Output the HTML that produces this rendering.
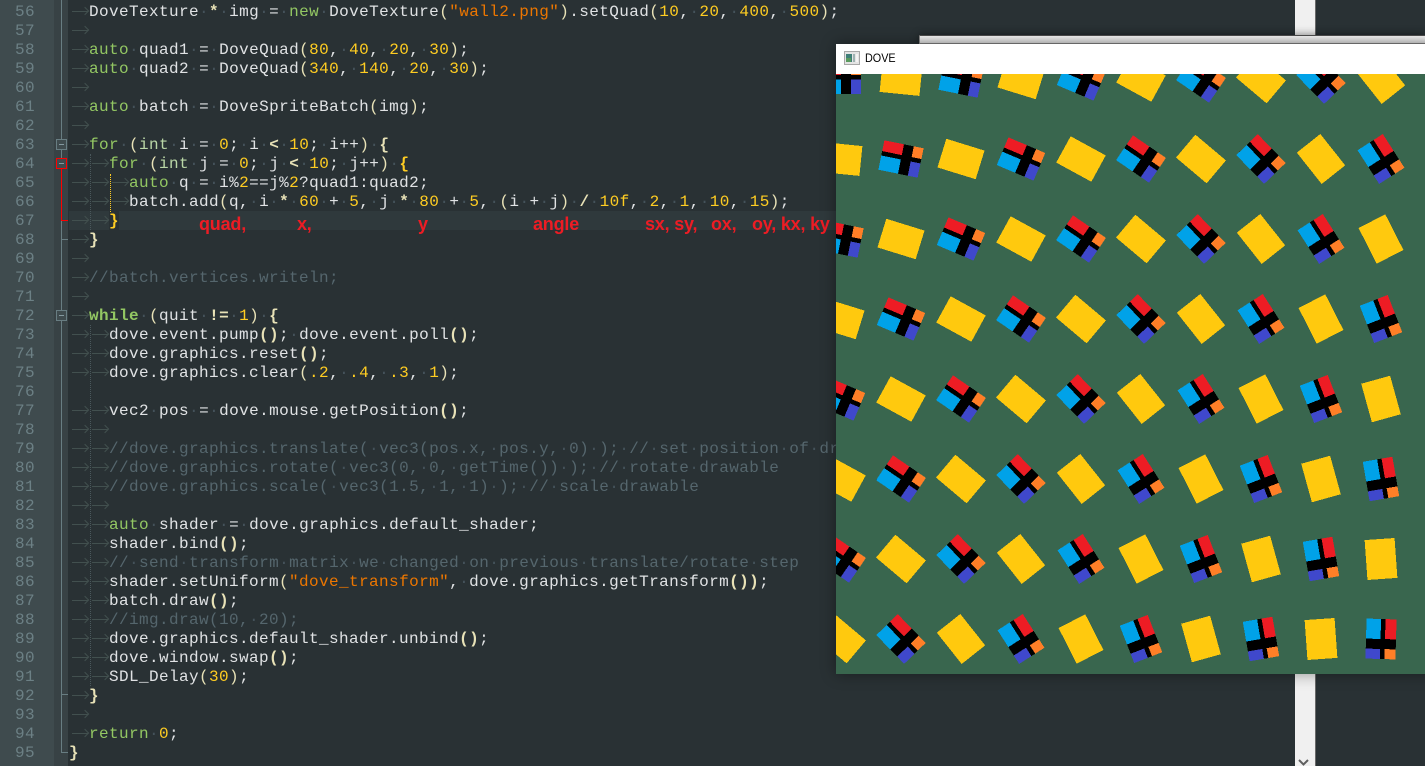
<!DOCTYPE html>
<html>
<head>
<meta charset="utf-8">
<title>DOVE</title>
<style>
html,body{margin:0;padding:0;width:1425px;height:766px;overflow:hidden;background:#293134}
#gut{position:absolute;left:0;top:0;width:54px;height:766px;background:#3f4b4e}
#fold{position:absolute;left:54px;top:0;width:14px;height:766px;background:#384245}
.tree{position:absolute;background:#687d82}
.box{position:absolute;left:56px;width:9px;height:9px;border:1px solid #687d82;background:#3f4b4e}
.box::after{content:"";position:absolute;left:2px;top:4px;width:5px;height:1px;background:#8499a0}
#ln{position:absolute;left:0;top:3px;width:35px;text-align:right;font:16px/19px "Liberation Mono",monospace;color:#6c8085;letter-spacing:.4px}
#ln div{height:19px}
#hl{position:absolute;left:69px;top:211px;width:770px;height:19px;background:#2f393c}
#hb{position:absolute;left:109px;top:211px;width:10px;height:19px;background:#293134}
.g{position:absolute;left:90px;width:0;border-left:1px dotted #4a585c}
#code{position:absolute;left:69px;top:3px;font:16px/19px "Liberation Mono",monospace;color:#e0e2e4;letter-spacing:.4px}
#code div{height:19px;white-space:pre}
#code i{font-style:normal;color:#44525a}
#code u{text-decoration:none;display:inline-block;width:20px;height:1px;position:relative;vertical-align:4px;letter-spacing:0}
#code u::before{content:"";position:absolute;left:3px;width:16px;top:0;height:1px;background:#42504f}
#code u::after{content:"";position:absolute;right:1px;top:-3px;width:6px;height:6px;border-top:1px solid #42504f;border-right:1px solid #42504f;transform:rotate(45deg);box-sizing:border-box}
.k{color:#93c763}
.t{color:#b9d6a6}
.n{color:#ffcd22}
.s{color:#ec7600}
.c{color:#55666d}
.o{color:#e8e2b7}
.b{font-weight:bold;color:#e8e2b7}
.w{font-weight:bold;color:#93c763}
.a{position:absolute;top:213px;font:bold 18px/22px "Liberation Sans",sans-serif;color:#ed1c24;letter-spacing:-.2px;white-space:pre}
#sb{position:absolute;left:1295px;top:0;width:20px;height:766px;background:#f0f0f0}
#sl{position:absolute;left:1315px;top:0;width:1px;height:766px;background:#696969}
#back{position:absolute;left:919px;top:35px;width:506px;height:9px;box-sizing:border-box;border-top:1px solid #4c4c4c;border-left:1px solid #888;border-bottom:1px solid #7f7f7f;background:linear-gradient(#f4f4f4,#d8d8d8);box-shadow:0 0 9px rgba(0,0,0,.45)}
#clip{position:absolute;left:0;top:0;width:1425px;height:766px;overflow:hidden}
#win{position:absolute;left:836px;top:44px;width:600px;height:630px;background:#fff;box-shadow:0 0 14px rgba(0,0,0,.4)}
#ttl{position:absolute;left:29px;top:7px;font:12px/15px "Liberation Sans",sans-serif;color:#000;transform:scaleX(.9);transform-origin:0 0}
#ic{position:absolute;left:8px;top:7px}
#sc{position:absolute;left:0;top:30px;width:589px;height:600px;background:#39664e}
</style>
</head>
<body>
<div id="clip">
<div id="gut"></div>
<div id="fold"></div>
<div class="tree" style="left:61px;top:0;width:1px;height:753px"></div>
<div class="tree" style="left:61px;top:752px;width:7px;height:1px"></div>
<div class="tree" style="left:61px;top:239px;width:7px;height:1px"></div>
<div class="tree" style="left:61px;top:694px;width:7px;height:1px"></div>
<div class="box" style="top:139px"></div>
<div class="box" style="top:310px"></div>
<div style="position:absolute;left:61px;top:164px;width:1px;height:57px;background:#f00"></div>
<div style="position:absolute;left:61px;top:220px;width:7px;height:1px;background:#f00"></div>
<div class="box" style="top:158px;border-color:#f00;background:#3f4b4e"></div>
<div id="ln"><div>56</div><div>57</div><div>58</div><div>59</div><div>60</div><div>61</div><div>62</div><div>63</div><div>64</div><div>65</div><div>66</div><div>67</div><div>68</div><div>69</div><div>70</div><div>71</div><div>72</div><div>73</div><div>74</div><div>75</div><div>76</div><div>77</div><div>78</div><div>79</div><div>80</div><div>81</div><div>82</div><div>83</div><div>84</div><div>85</div><div>86</div><div>87</div><div>88</div><div>89</div><div>90</div><div>91</div><div>92</div><div>93</div><div>94</div><div>95</div></div>
<div id="hl"></div><div id="hb"></div>
<div class="g" style="top:154px;height:76px"></div>
<div class="g" style="top:325px;height:361px"></div>
<div class="g" style="left:110px;top:174px;height:38px;border-left-color:#ffcd22"></div>
<div id="code">
<div><u></u>DoveTexture<i>·</i><span class="b">*</span><i>·</i>img<i>·</i>=<i>·</i><span class="k">new</span><i>·</i>DoveTexture<span class="o">(</span><span class="s">"wall2.png"</span><span class="o">)</span>.setQuad<span class="o">(</span><span class="n">10</span>,<i>·</i><span class="n">20</span>,<i>·</i><span class="n">400</span>,<i>·</i><span class="n">500</span><span class="o">)</span>;</div>
<div><u></u></div>
<div><u></u><span class="k">auto</span><i>·</i>quad1<i>·</i>=<i>·</i>DoveQuad<span class="o">(</span><span class="n">80</span>,<i>·</i><span class="n">40</span>,<i>·</i><span class="n">20</span>,<i>·</i><span class="n">30</span><span class="o">)</span>;</div>
<div><u></u><span class="k">auto</span><i>·</i>quad2<i>·</i>=<i>·</i>DoveQuad<span class="o">(</span><span class="n">340</span>,<i>·</i><span class="n">140</span>,<i>·</i><span class="n">20</span>,<i>·</i><span class="n">30</span><span class="o">)</span>;</div>
<div><u></u></div>
<div><u></u><span class="k">auto</span><i>·</i>batch<i>·</i>=<i>·</i>DoveSpriteBatch<span class="o">(</span>img<span class="o">)</span>;</div>
<div><u></u></div>
<div><u></u><span class="k">for</span><i>·</i><span class="o">(</span><span class="t">int</span><i>·</i>i<i>·</i>=<i>·</i><span class="n">0</span>;<i>·</i>i<i>·</i><span class="b">&lt;</span><i>·</i><span class="n">10</span>;<i>·</i>i++<span class="o">)</span><i>·</i><span class="b">{</span></div>
<div><u></u><u></u><span class="k">for</span><i>·</i><span class="o">(</span><span class="t">int</span><i>·</i>j<i>·</i>=<i>·</i><span class="n">0</span>;<i>·</i>j<i>·</i><span class="b">&lt;</span><i>·</i><span class="n">10</span>;<i>·</i>j++<span class="o">)</span><i>·</i><span class="b" style="color:#ffcd22">{</span></div>
<div><u></u><u></u><u></u><span class="k">auto</span><i>·</i>q<i>·</i>=<i>·</i>i%<span class="n">2</span>==j%<span class="n">2</span>?quad1:quad2;</div>
<div><u></u><u></u><u></u>batch.add<span class="o">(</span>q,<i>·</i>i<i>·</i><span class="b">*</span><i>·</i><span class="n">60</span><i>·</i>+<i>·</i><span class="n">5</span>,<i>·</i>j<i>·</i><span class="b">*</span><i>·</i><span class="n">80</span><i>·</i>+<i>·</i><span class="n">5</span>,<i>·</i><span class="o">(</span>i<i>·</i>+<i>·</i>j<span class="o">)</span><i>·</i><span class="b">/</span><i>·</i><span class="n">10f</span>,<i>·</i><span class="n">2</span>,<i>·</i><span class="n">1</span>,<i>·</i><span class="n">10</span>,<i>·</i><span class="n">15</span><span class="o">)</span>;</div>
<div><u></u><u></u><span class="b" style="color:#ffcd22">}</span></div>
<div><u></u><span class="b">}</span></div>
<div><u></u></div>
<div><u></u><span class="c">//batch.vertices.writeln;</span></div>
<div><u></u></div>
<div><u></u><span class="w">while</span><i>·</i><span class="o">(</span>quit<i>·</i><span class="b">!=</span><i>·</i><span class="n">1</span><span class="o">)</span><i>·</i><span class="b">{</span></div>
<div><u></u><u></u>dove.event.pump<span class="b">()</span>;<i>·</i>dove.event.poll<span class="b">()</span>;</div>
<div><u></u><u></u>dove.graphics.reset<span class="b">()</span>;</div>
<div><u></u><u></u>dove.graphics.clear<span class="o">(</span><span class="n">.2</span>,<i>·</i><span class="n">.4</span>,<i>·</i><span class="n">.3</span>,<i>·</i><span class="n">1</span><span class="o">)</span>;</div>
<div></div>
<div><u></u><u></u>vec2<i>·</i>pos<i>·</i>=<i>·</i>dove.mouse.getPosition<span class="b">()</span>;</div>
<div><u></u><u></u></div>
<div><u></u><u></u><span class="c">//dove.graphics.translate(<i>·</i>vec3(pos.x,<i>·</i>pos.y,<i>·</i>0)<i>·</i>);<i>·</i>//<i>·</i>set<i>·</i>position<i>·</i>of<i>·</i>drawable</span></div>
<div><u></u><u></u><span class="c">//dove.graphics.rotate(<i>·</i>vec3(0,<i>·</i>0,<i>·</i>getTime())<i>·</i>);<i>·</i>//<i>·</i>rotate<i>·</i>drawable</span></div>
<div><u></u><u></u><span class="c">//dove.graphics.scale(<i>·</i>vec3(1.5,<i>·</i>1,<i>·</i>1)<i>·</i>);<i>·</i>//<i>·</i>scale<i>·</i>drawable</span></div>
<div><u></u><u></u></div>
<div><u></u><u></u><span class="k">auto</span><i>·</i>shader<i>·</i>=<i>·</i>dove.graphics.default_shader;</div>
<div><u></u><u></u>shader.bind<span class="b">()</span>;</div>
<div><u></u><u></u><span class="c">//<i>·</i>send<i>·</i>transform<i>·</i>matrix<i>·</i>we<i>·</i>changed<i>·</i>on<i>·</i>previous<i>·</i>translate/rotate<i>·</i>step</span></div>
<div><u></u><u></u>shader.setUniform<span class="o">(</span><span class="s">"dove_transform"</span>,<i>·</i>dove.graphics.getTransform<span class="b">())</span>;</div>
<div><u></u><u></u>batch.draw<span class="b">()</span>;</div>
<div><u></u><u></u><span class="c">//img.draw(10,<i>·</i>20);</span></div>
<div><u></u><u></u>dove.graphics.default_shader.unbind<span class="b">()</span>;</div>
<div><u></u><u></u>dove.window.swap<span class="b">()</span>;</div>
<div><u></u><u></u>SDL_Delay<span class="o">(</span><span class="n">30</span><span class="o">)</span>;</div>
<div><u></u><span class="b">}</span></div>
<div><u></u></div>
<div><u></u><span class="k">return</span><i>·</i><span class="n">0</span>;</div>
<div><span class="b">}</span></div>
</div>
<div class="a" style="left:199px">quad,</div>
<div class="a" style="left:297px">x,</div>
<div class="a" style="left:418px">y</div>
<div class="a" style="left:533px">angle</div>
<div class="a" style="left:645px">sx, sy,</div>
<div class="a" style="left:711px">ox,</div>
<div class="a" style="left:752px">oy, kx, ky</div>

<div id="sb"></div><div id="sl"></div>
<svg style="position:absolute;left:1298px;top:756px" width="12" height="10"><path d="M1 4 L5.5 8.5 L10 4" fill="none" stroke="#606060" stroke-width="2"/></svg>
<div id="back"></div>
<div id="win">
<svg id="ic" width="16" height="14" viewBox="0 0 16 14"><rect x=".5" y=".5" width="15" height="13" fill="#e4e4e4" stroke="#a8a8a8"/><rect x="2" y="3" width="6" height="8" fill="#3f7f78"/><rect x="2" y="7" width="5" height="4" fill="#5a9a5e"/><rect x="9" y="3" width="2" height="8" fill="#9fb2b2"/><rect x="12" y="3" width="2" height="8" fill="#f4f4f4"/></svg>
<div id="ttl">DOVE</div>
<svg id="sc" width="589" height="600" viewBox="0 0 589 600" shape-rendering="crispEdges">
<defs>
<g id="m"><rect x="-20" y="-15" width="40" height="30" fill="#000"/><rect x="-20" y="-15" width="20" height="11" fill="#ed1c24"/><rect x="10" y="-15" width="10" height="11" fill="#ff7f27"/><rect x="-20" y="0.5" width="20" height="14.5" fill="#00a2e8"/><rect x="10" y="0.5" width="10" height="14.5" fill="#3f48cc"/></g>
<rect id="y" x="-20" y="-15" width="40" height="30" fill="#ffc90e"/>
</defs>
<use href="#m" transform="translate(5 5)"/><use href="#y" transform="translate(65 5) rotate(5.73)"/><use href="#m" transform="translate(125 5) rotate(11.46)"/><use href="#y" transform="translate(185 5) rotate(17.19)"/><use href="#m" transform="translate(245 5) rotate(22.92)"/><use href="#y" transform="translate(305 5) rotate(28.65)"/><use href="#m" transform="translate(365 5) rotate(34.38)"/><use href="#y" transform="translate(425 5) rotate(40.11)"/><use href="#m" transform="translate(485 5) rotate(45.84)"/><use href="#y" transform="translate(545 5) rotate(51.57)"/>
<use href="#y" transform="translate(5 85) rotate(5.73)"/><use href="#m" transform="translate(65 85) rotate(11.46)"/><use href="#y" transform="translate(125 85) rotate(17.19)"/><use href="#m" transform="translate(185 85) rotate(22.92)"/><use href="#y" transform="translate(245 85) rotate(28.65)"/><use href="#m" transform="translate(305 85) rotate(34.38)"/><use href="#y" transform="translate(365 85) rotate(40.11)"/><use href="#m" transform="translate(425 85) rotate(45.84)"/><use href="#y" transform="translate(485 85) rotate(51.57)"/><use href="#m" transform="translate(545 85) rotate(57.3)"/>
<use href="#m" transform="translate(5 165) rotate(11.46)"/><use href="#y" transform="translate(65 165) rotate(17.19)"/><use href="#m" transform="translate(125 165) rotate(22.92)"/><use href="#y" transform="translate(185 165) rotate(28.65)"/><use href="#m" transform="translate(245 165) rotate(34.38)"/><use href="#y" transform="translate(305 165) rotate(40.11)"/><use href="#m" transform="translate(365 165) rotate(45.84)"/><use href="#y" transform="translate(425 165) rotate(51.57)"/><use href="#m" transform="translate(485 165) rotate(57.3)"/><use href="#y" transform="translate(545 165) rotate(63.03)"/>
<use href="#y" transform="translate(5 245) rotate(17.19)"/><use href="#m" transform="translate(65 245) rotate(22.92)"/><use href="#y" transform="translate(125 245) rotate(28.65)"/><use href="#m" transform="translate(185 245) rotate(34.38)"/><use href="#y" transform="translate(245 245) rotate(40.11)"/><use href="#m" transform="translate(305 245) rotate(45.84)"/><use href="#y" transform="translate(365 245) rotate(51.57)"/><use href="#m" transform="translate(425 245) rotate(57.3)"/><use href="#y" transform="translate(485 245) rotate(63.03)"/><use href="#m" transform="translate(545 245) rotate(68.75)"/>
<use href="#m" transform="translate(5 325) rotate(22.92)"/><use href="#y" transform="translate(65 325) rotate(28.65)"/><use href="#m" transform="translate(125 325) rotate(34.38)"/><use href="#y" transform="translate(185 325) rotate(40.11)"/><use href="#m" transform="translate(245 325) rotate(45.84)"/><use href="#y" transform="translate(305 325) rotate(51.57)"/><use href="#m" transform="translate(365 325) rotate(57.3)"/><use href="#y" transform="translate(425 325) rotate(63.03)"/><use href="#m" transform="translate(485 325) rotate(68.75)"/><use href="#y" transform="translate(545 325) rotate(74.48)"/>
<use href="#y" transform="translate(5 405) rotate(28.65)"/><use href="#m" transform="translate(65 405) rotate(34.38)"/><use href="#y" transform="translate(125 405) rotate(40.11)"/><use href="#m" transform="translate(185 405) rotate(45.84)"/><use href="#y" transform="translate(245 405) rotate(51.57)"/><use href="#m" transform="translate(305 405) rotate(57.3)"/><use href="#y" transform="translate(365 405) rotate(63.03)"/><use href="#m" transform="translate(425 405) rotate(68.75)"/><use href="#y" transform="translate(485 405) rotate(74.48)"/><use href="#m" transform="translate(545 405) rotate(80.21)"/>
<use href="#m" transform="translate(5 485) rotate(34.38)"/><use href="#y" transform="translate(65 485) rotate(40.11)"/><use href="#m" transform="translate(125 485) rotate(45.84)"/><use href="#y" transform="translate(185 485) rotate(51.57)"/><use href="#m" transform="translate(245 485) rotate(57.3)"/><use href="#y" transform="translate(305 485) rotate(63.03)"/><use href="#m" transform="translate(365 485) rotate(68.75)"/><use href="#y" transform="translate(425 485) rotate(74.48)"/><use href="#m" transform="translate(485 485) rotate(80.21)"/><use href="#y" transform="translate(545 485) rotate(85.94)"/>
<use href="#y" transform="translate(5 565) rotate(40.11)"/><use href="#m" transform="translate(65 565) rotate(45.84)"/><use href="#y" transform="translate(125 565) rotate(51.57)"/><use href="#m" transform="translate(185 565) rotate(57.3)"/><use href="#y" transform="translate(245 565) rotate(63.03)"/><use href="#m" transform="translate(305 565) rotate(68.75)"/><use href="#y" transform="translate(365 565) rotate(74.48)"/><use href="#m" transform="translate(425 565) rotate(80.21)"/><use href="#y" transform="translate(485 565) rotate(85.94)"/><use href="#m" transform="translate(545 565) rotate(91.67)"/>
</svg>
</div>
</div>
</body>
</html>
